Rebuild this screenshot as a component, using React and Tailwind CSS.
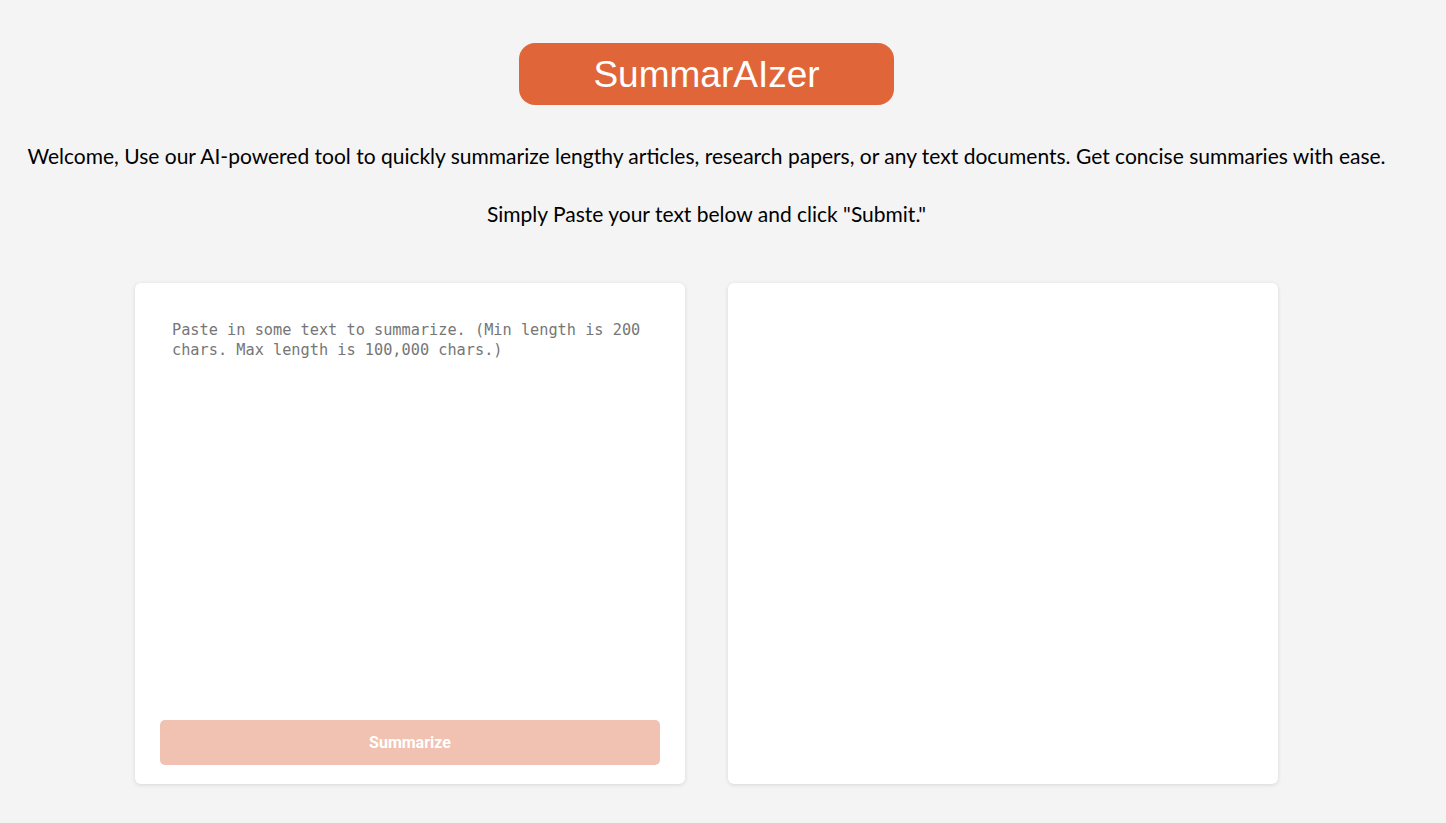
import React, { useState } from "react";

export default function App() {
  const [text, setText] = useState("");

  return (
    <div className="min-h-screen w-full bg-[#f4f4f4]">
      <div className="w-[1413px] flex flex-col items-center pt-[43px]">
        {/* Title badge */}
        <div className="w-[375px] h-[62px] rounded-[16px] bg-[#e0663a] flex items-center justify-center">
          <h1 className="text-white text-[37px] leading-none font-['Liberation_Sans',Arial,sans-serif]">
            SummarAIzer
          </h1>
        </div>

        {/* Intro copy */}
        <div className="mt-[37px] text-center text-black text-[21px] leading-[28px] font-['Lato','Open_Sans',sans-serif]">
          <p>
            Welcome, Use our AI-powered tool to quickly summarize lengthy articles, research papers, or any text documents. Get concise summaries with ease.
          </p>
          <p className="mt-[30px]">Simply Paste your text below and click "Submit."</p>
        </div>

        {/* Panels */}
        <div className="mt-[55px] flex gap-[43px]">
          <div className="w-[550px] h-[501px] bg-white rounded-[6px] shadow-[0_1px_4px_rgba(0,0,0,0.12)] px-[25px] pt-[25px] pb-[19px] flex flex-col">
            <textarea
              value={text}
              onChange={(e) => setText(e.target.value)}
              placeholder="Paste in some text to summarize. (Min length is 200 chars. Max length is 100,000 chars.)"
              className="flex-1 resize-none outline-none px-[12px] pt-[12px] text-[15.25px] leading-[20px] text-gray-800 placeholder:text-[#767676] font-['DejaVu_Sans_Mono',monospace]"
            />
            <button
              disabled={text.length < 200}
              className="mt-[10px] h-[45px] w-full rounded-[5px] bg-[#f1c2b1] text-white text-[16px] font-bold font-['Roboto',sans-serif]"
            >
              Summarize
            </button>
          </div>
          <div className="w-[550px] h-[501px] bg-white rounded-[6px] shadow-[0_1px_4px_rgba(0,0,0,0.12)]" />
        </div>
      </div>
    </div>
  );
}
